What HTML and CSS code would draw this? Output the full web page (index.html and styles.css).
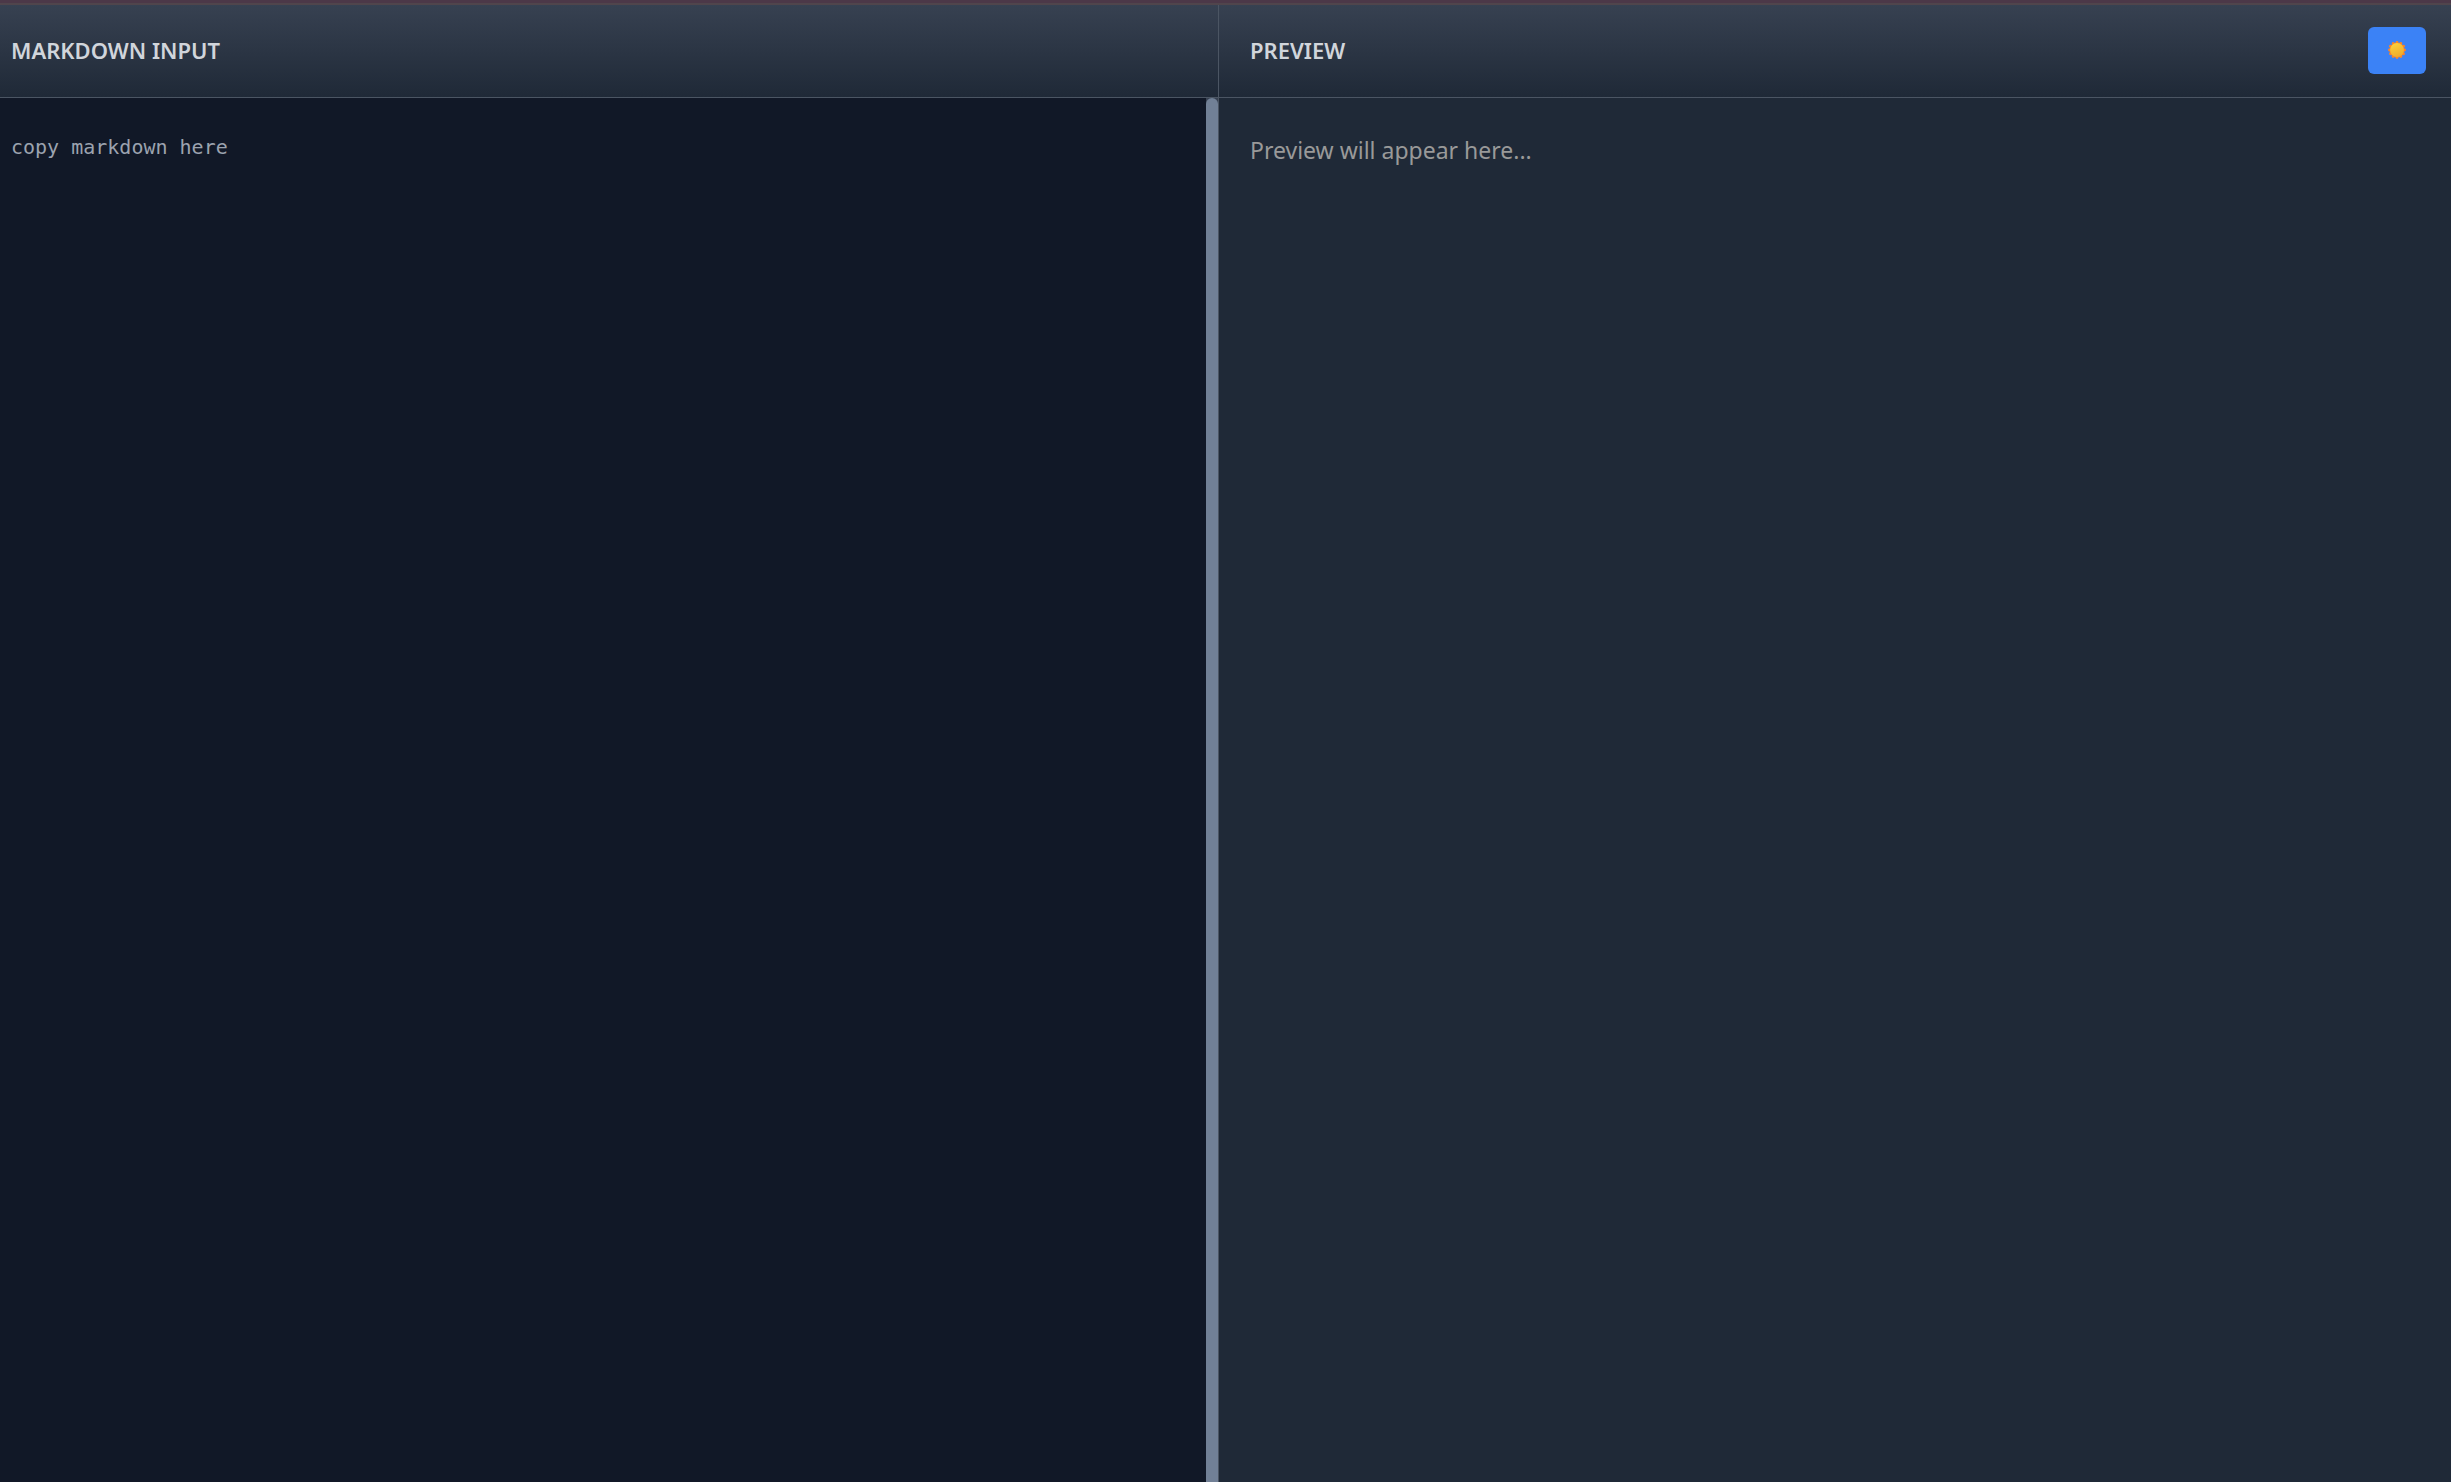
FILE: index.html
```html
<!DOCTYPE html>
<html lang="en">
<head>
<meta charset="utf-8">
<title>Markdown Preview</title>
<link rel="stylesheet" href="styles.css">
</head>
<body>
<div class="accent"></div>
<main class="workspace">
  <section class="panel panel-input">
    <header class="panel-header"><label class="panel-title" for="source">MARKDOWN INPUT</label></header>
    <div class="editor">
      <textarea class="source" id="source" placeholder="copy markdown here"></textarea>
      <div class="track"><div class="thumb"></div></div>
    </div>
  </section>
  <section class="panel panel-preview">
    <header class="panel-header">
      <h2 class="panel-title">PREVIEW</h2>
      <button class="theme-toggle" type="button" aria-label="Toggle theme">
        <svg class="sun" viewBox="0 0 18 18" aria-hidden="true">
          <defs><linearGradient id="disc" x1="0.2" y1="0" x2="0.6" y2="1"><stop offset="0" stop-color="#fad13c"/><stop offset="1" stop-color="#efab2c"/></linearGradient></defs>
          <g fill="#f8852b">
            <circle cx="9" cy="1.4" r="1.4"/><circle cx="12.8" cy="2.4" r="1.4"/><circle cx="15.6" cy="5.2" r="1.4"/><circle cx="16.6" cy="9" r="1.4"/><circle cx="15.6" cy="12.8" r="1.4"/><circle cx="12.8" cy="15.6" r="1.4"/><circle cx="9" cy="16.6" r="1.4"/><circle cx="5.2" cy="15.6" r="1.4"/><circle cx="2.4" cy="12.8" r="1.4"/><circle cx="1.4" cy="9" r="1.4"/><circle cx="2.4" cy="5.2" r="1.4"/><circle cx="5.2" cy="2.4" r="1.4"/><circle cx="9" cy="9" r="7.6"/>
          </g>
          <circle cx="9" cy="9" r="6.9" fill="url(#disc)"/>
        </svg>
      </button>
    </header>
    <div class="preview"><p class="empty">Preview will appear here...</p></div>
  </section>
</main>
</body>
</html>
```
FILE: styles.css
```css
* { box-sizing: border-box; }
body {
  margin: 0;
  min-height: 100vh;
  display: flex;
  flex-direction: column;
  background: #1f2937;
  font-family: "Noto Sans", "Open Sans", sans-serif;
}
.accent { height: 5px; background: #4c3848; border-bottom: 2px solid #50454c; }
.workspace { flex: 1; display: grid; grid-template-columns: 1218fr 1233fr; }
.panel { display: flex; flex-direction: column; min-width: 0; }
.panel-preview { border-left: 1px solid #4b5563; }
.panel-header {
  height: 93px;
  display: flex;
  align-items: center;
  justify-content: space-between;
  padding: 0 25px 2px 31px;
  border-bottom: 1px solid #4b5563;
  background: linear-gradient(#374151, #1f2937);
}
.panel-input .panel-header { padding-left: 11px; }
.panel-title {
  margin: 0;
  color: #d1d5db;
  font-size: 22px;
  line-height: 30px;
  font-weight: 600;
}
.editor { flex: 1; display: flex; background: #111827; }
.source {
  flex: 1;
  padding: 36px 11px;
  border: 0;
  outline: 0;
  resize: none;
  background: transparent;
  color: #d1d5db;
  font-family: "DejaVu Sans Mono", monospace;
  font-size: 20px;
  line-height: 26px;
}
.source::placeholder { color: #9ca3af; opacity: 1; }
.track { width: 12px; display: flex; background: #374151; }
.thumb { flex: 1; border-radius: 6px 6px 0 0; background: #718096; }
.preview { flex: 1; padding: 36px 31px; }
.empty { margin: 0; color: #999; font-size: 23px; line-height: 32px; }
.theme-toggle {
  width: 58px;
  height: 47px;
  display: flex;
  align-items: center;
  justify-content: center;
  padding: 0;
  border: 0;
  border-radius: 6px;
  background: #3b82f6;
}
.sun { width: 18px; height: 18px; }
```
